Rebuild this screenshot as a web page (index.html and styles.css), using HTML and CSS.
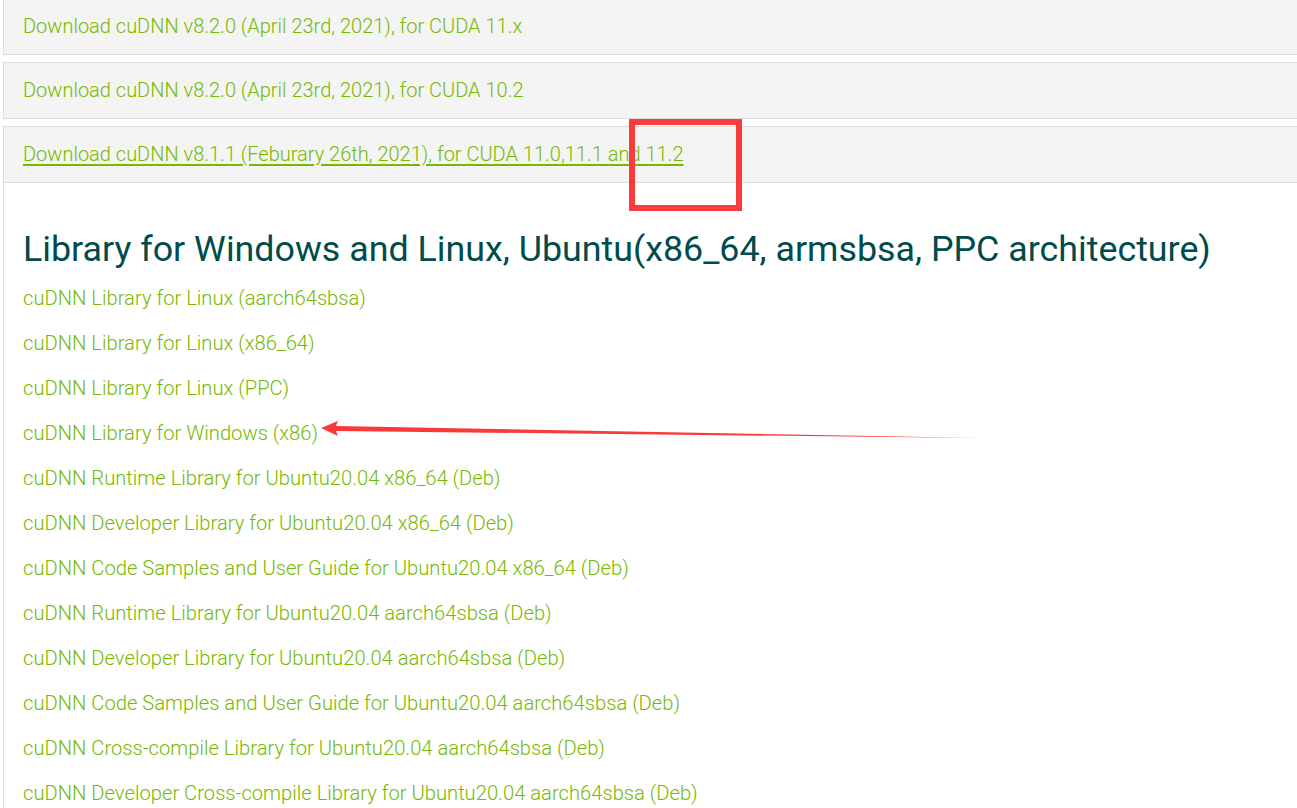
FILE: index.html
```html
<!DOCTYPE html>
<html>
<head>
<meta charset="utf-8">
<link rel="stylesheet" href="styles.css">
</head>
<body>
<div class="page">
  <div class="panel"><a class="panel-link" href="#">Download cuDNN v8.2.0 (April 23rd, 2021), for CUDA 11.x</a></div>
  <div class="panel"><a class="panel-link" href="#">Download cuDNN v8.2.0 (April 23rd, 2021), for CUDA 10.2</a></div>
  <div class="panel open"><a class="panel-link active" href="#">Download cuDNN v8.1.1 (Feburary 26th, 2021), for CUDA 11.0,11.1 and 11.2</a></div>
  <div class="panel-body">
    <h2 class="title">Library for Windows and Linux, Ubuntu(x86_64, armsbsa, PPC architecture)</h2>
    <ul class="links">
      <li><a href="#">cuDNN Library for Linux (aarch64sbsa)</a></li>
      <li><a href="#">cuDNN Library for Linux (x86_64)</a></li>
      <li><a href="#">cuDNN Library for Linux (PPC)</a></li>
      <li><a href="#">cuDNN Library for Windows (x86)</a></li>
      <li><a href="#">cuDNN Runtime Library for Ubuntu20.04 x86_64 (Deb)</a></li>
      <li><a href="#">cuDNN Developer Library for Ubuntu20.04 x86_64 (Deb)</a></li>
      <li><a href="#">cuDNN Code Samples and User Guide for Ubuntu20.04 x86_64 (Deb)</a></li>
      <li><a href="#">cuDNN Runtime Library for Ubuntu20.04 aarch64sbsa (Deb)</a></li>
      <li><a href="#">cuDNN Developer Library for Ubuntu20.04 aarch64sbsa (Deb)</a></li>
      <li><a href="#">cuDNN Code Samples and User Guide for Ubuntu20.04 aarch64sbsa (Deb)</a></li>
      <li><a href="#">cuDNN Cross-compile Library for Ubuntu20.04 aarch64sbsa (Deb)</a></li>
      <li><a href="#">cuDNN Developer Cross-compile Library for Ubuntu20.04 aarch64sbsa (Deb)</a></li>
    </ul>
  </div>
  <div class="mark-box"></div>
  <svg class="mark-arrow" width="680" height="30" viewBox="0 0 680 30">
    <polygon points="0,7 17,0 15,5 660,17 15,10 17,15" fill="#f93a3a"/>
  </svg>
</div>
</body>
</html>
```
FILE: styles.css
```css
html, body {
  margin: 0;
  padding: 0;
  background: #fff;
  overflow: hidden;
}
body {
  font-family: Roboto, "Liberation Sans", sans-serif;
}
.page {
  position: relative;
  margin-top: -2px;
  padding-left: 3px;
  width: 1330px;
}
.panel {
  height: 53px;
  background: #f4f4f4;
  border: 1px solid #dcdcdc;
  margin-bottom: 7px;
  display: flex;
  align-items: center;
  padding-left: 19px;
  padding-bottom: 2px;
}
.panel.open {
  margin-bottom: 0;
}
.panel-link {
  color: #76b900;
  text-decoration: none;
  font-size: 20px;
  font-weight: 300;
}
.panel-link.active {
  text-decoration: underline;
  text-decoration-thickness: 2px;
  text-underline-offset: 3px;
}
.panel-body {
  border-left: 1px solid #dcdcdc;
  padding: 46px 0 0 19px;
}
.title {
  margin: 0 0 7px;
  font-size: 35.8px;
  font-weight: 400;
  color: #004b4b;
  line-height: 40px;
  white-space: nowrap;
}
.links {
  list-style: none;
  margin: 0;
  padding: 0;
}
.links li {
  height: 45px;
  line-height: 45px;
}
.links a {
  color: #76b900;
  text-decoration: none;
  font-size: 20.2px;
  font-weight: 300;
}
.mark-box {
  position: absolute;
  left: 629px;
  top: 121px;
  width: 101px;
  height: 80px;
  border: 6px solid #fb3b3b;
}
.mark-arrow {
  position: absolute;
  left: 321px;
  top: 423px;
}
```
